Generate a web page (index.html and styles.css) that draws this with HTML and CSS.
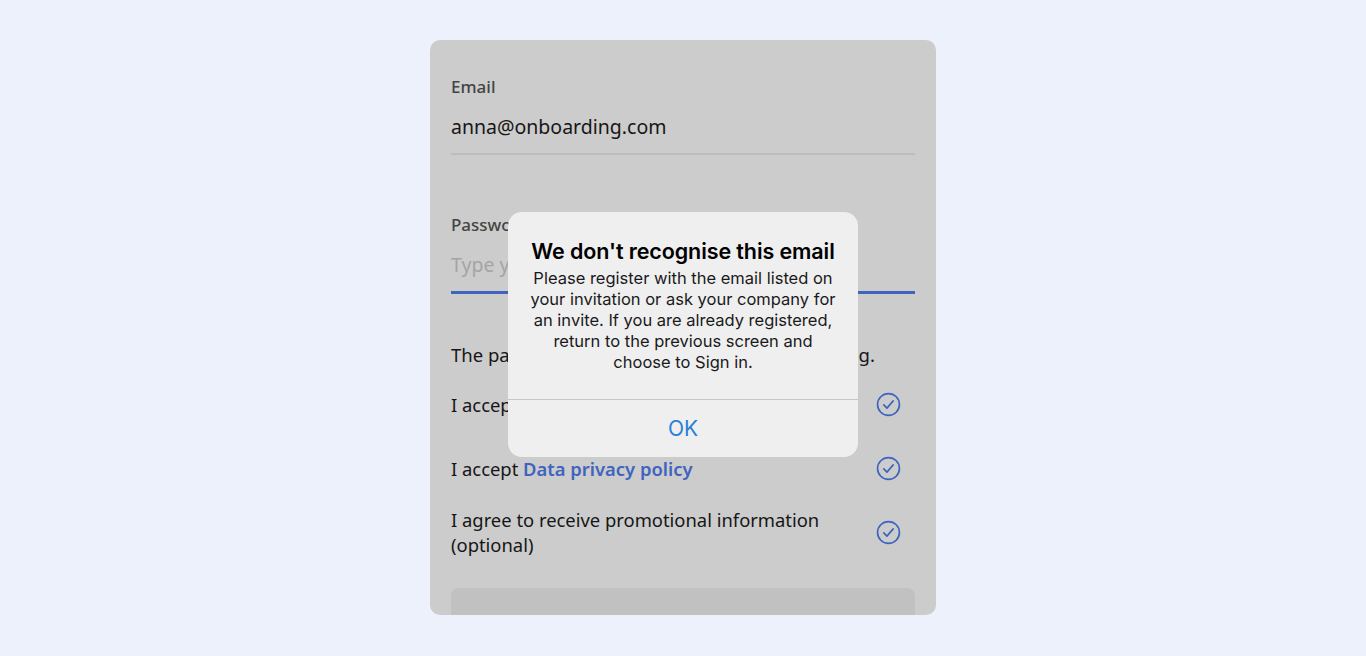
FILE: index.html
```html
<!DOCTYPE html>
<html lang="en">
<head>
    <meta charset="UTF-8">
    <meta name="viewport" content="width=device-width, initial-scale=1.0">
    <title>Sign up</title>
    <link rel="stylesheet" href="styles.css">
</head>
<body>
    <div class="screen">
        <!-- Registration form, dimmed behind the alert -->
        <div class="form">
            <div class="field">
                <label class="field-label">Email</label>
                <div class="field-value">anna@onboarding.com</div>
            </div>

            <div class="field field-active">
                <label class="field-label">Password</label>
                <div class="field-value placeholder">Type your password</div>
            </div>

            <p class="hint">The password must be at least 8 characters long.</p>

            <div class="consent">
                <span>I accept <a href="#" class="link">Terms of use</a></span>
                <svg class="check" viewBox="0 0 24 24"><circle cx="12" cy="12" r="10.5"/><path d="M7.5 12.3l3 3.2 6-7"/></svg>
            </div>
            <div class="consent">
                <span>I accept <a href="#" class="link">Data privacy policy</a></span>
                <svg class="check" viewBox="0 0 24 24"><circle cx="12" cy="12" r="10.5"/><path d="M7.5 12.3l3 3.2 6-7"/></svg>
            </div>
            <div class="consent consent-long">
                <span>I agree to receive promotional information (optional)</span>
                <svg class="check" viewBox="0 0 24 24"><circle cx="12" cy="12" r="10.5"/><path d="M7.5 12.3l3 3.2 6-7"/></svg>
            </div>

            <div class="submit"></div>

            <!-- Alert -->
            <div class="alert">
                <div class="alert-body">
                    <h2>We don't recognise this email</h2>
                    <p>Please register with the email listed on your invitation or ask your company for an invite. If you are already registered, return to the previous screen and choose to Sign in.</p>
                </div>
                <button class="alert-btn">OK</button>
            </div>
        </div>
    </div>
</body>
</html>
```

FILE: styles.css
```css
html, body {
    margin: 0;
    padding: 0;
}

body {
    background-color: #edf1fc;
    font-family: 'Noto Sans', sans-serif;
    color: #161616;
}

.screen {
    display: flex;
    justify-content: center;
    padding-top: 40px;
    height: 616px;
}

.form {
    position: relative;
    width: 506px;
    height: 575px;
    box-sizing: border-box;
    padding: 35px 21px 0;
    background-color: #cccccc;
    border-radius: 10px;
    overflow: hidden;
}

.field {
    display: flex;
    flex-direction: column;
    gap: 14px;
    padding-bottom: 12px;
    border-bottom: 2px solid #bdbdbd;
}

.field + .field {
    margin-top: 58px;
}

.field-active {
    padding-bottom: 12px;
    border-bottom: 3px solid #3e64c0;
}

.field-label {
    font-size: 17px;
    line-height: 24px;
    font-weight: 500;
    color: #444;
}

.field-value {
    font-size: 19.5px;
    line-height: 28px;
}

.placeholder {
    color: #a4a4a4;
}

.hint {
    margin: 47px 0 0;
    font-size: 18.5px;
    line-height: 28px;
}

.consent {
    display: flex;
    align-items: center;
    justify-content: space-between;
    min-height: 40px;
    margin-top: 24px;
    font-size: 18.4px;
    line-height: 25px;
}

.hint + .consent {
    margin-top: 15px;
}

.consent-long {
    margin-top: 19px;
}

.consent span {
    max-width: 400px;
}

.link {
    color: #3e64c0;
    font-weight: 600;
    text-decoration: none;
}

.check {
    flex: none;
    width: 25px;
    height: 25px;
    margin-right: 14px;
    fill: none;
    stroke: #3e64c0;
    stroke-width: 1.6;
    stroke-linecap: round;
    stroke-linejoin: round;
}

.submit {
    height: 56px;
    margin-top: 31px;
    border-radius: 8px;
    background-color: #c1c1c1;
}

/* iOS style alert */
.alert {
    position: absolute;
    top: 172px;
    left: 78px;
    width: 350px;
    background-color: #efeff0;
    border-radius: 14px;
    font-family: 'Inter', 'Roboto', sans-serif;
    text-align: center;
}

.alert-body {
    padding: 26px 18px 26px;
}

.alert h2 {
    margin: 0;
    font-size: 21.5px;
    line-height: 26px;
    font-weight: 600;
    color: #000;
    letter-spacing: -0.1px;
}

.alert p {
    margin: 4px 0 0;
    font-size: 16.5px;
    line-height: 21px;
    color: #1a1a1a;
}

.alert-btn {
    display: block;
    width: 100%;
    height: 58px;
    border: none;
    border-top: 1px solid #c6c6c8;
    background: none;
    font-family: inherit;
    font-size: 21px;
    color: #2a7fd6;
}
```
